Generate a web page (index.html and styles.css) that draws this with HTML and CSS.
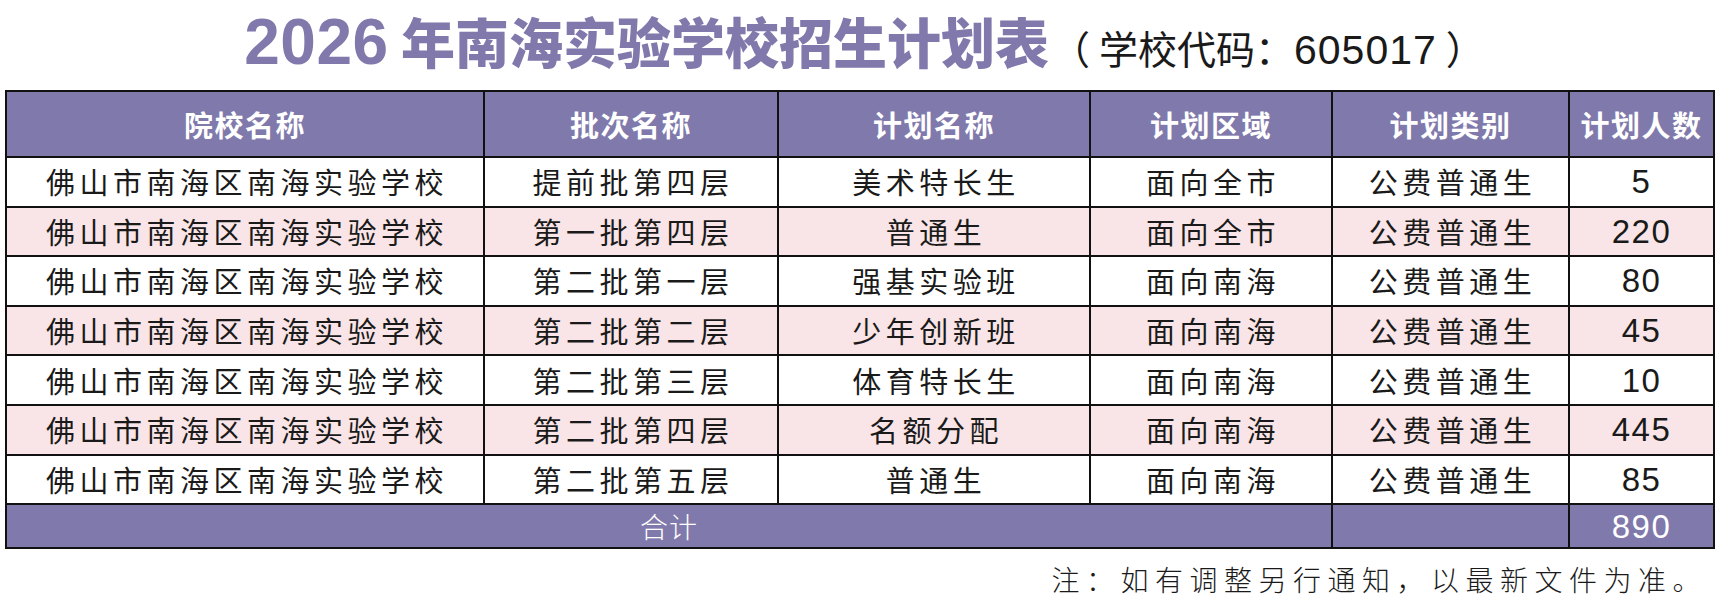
FILE: index.html
```html
<!DOCTYPE html>
<html lang="zh-CN">
<head>
<meta charset="utf-8">
<title>2026 年南海实验学校招生计划表</title>
<link rel="stylesheet" href="styles.css">
</head>
<body>
<div class="page">
  <h1 class="title">
    <span class="title-main"><span class="yr">2026</span> 年南海实验学校招生计划表</span>
    <span class="code">（<span class="gap"></span>学校代码：<span class="num">605017</span><span class="gap"></span>）</span>
  </h1>
  <table class="plan">
    <colgroup>
      <col class="c1"><col class="c2"><col class="c3"><col class="c4"><col class="c5"><col class="c6">
    </colgroup>
    <thead>
      <tr class="head">
        <th>院校名称</th><th>批次名称</th><th>计划名称</th><th>计划区域</th><th>计划类别</th><th>计划人数</th>
      </tr>
    </thead>
    <tbody>
      <tr><td>佛山市南海区南海实验学校</td><td>提前批第四层</td><td>美术特长生</td><td>面向全市</td><td>公费普通生</td><td class="n">5</td></tr>
      <tr class="alt"><td>佛山市南海区南海实验学校</td><td>第一批第四层</td><td>普通生</td><td>面向全市</td><td>公费普通生</td><td class="n">220</td></tr>
      <tr><td>佛山市南海区南海实验学校</td><td>第二批第一层</td><td>强基实验班</td><td>面向南海</td><td>公费普通生</td><td class="n">80</td></tr>
      <tr class="alt"><td>佛山市南海区南海实验学校</td><td>第二批第二层</td><td>少年创新班</td><td>面向南海</td><td>公费普通生</td><td class="n">45</td></tr>
      <tr><td>佛山市南海区南海实验学校</td><td>第二批第三层</td><td>体育特长生</td><td>面向南海</td><td>公费普通生</td><td class="n">10</td></tr>
      <tr class="alt"><td>佛山市南海区南海实验学校</td><td>第二批第四层</td><td>名额分配</td><td>面向南海</td><td>公费普通生</td><td class="n">445</td></tr>
      <tr><td>佛山市南海区南海实验学校</td><td>第二批第五层</td><td>普通生</td><td>面向南海</td><td>公费普通生</td><td class="n">85</td></tr>
    </tbody>
    <tfoot>
      <tr class="total">
        <td colspan="4" class="label">合计</td><td></td><td class="n">890</td>
      </tr>
    </tfoot>
  </table>
  <p class="note">注：如有调整另行通知，以最新文件为准。</p>
</div>
</body>
</html>
```

FILE: styles.css
```css
html, body {
  margin: 0;
  padding: 0;
  background: #ffffff;
}

.page {
  width: 1719px;
  height: 605px;
  font-family: "Noto Sans CJK SC", "Liberation Sans", sans-serif;
  color: #1a1a1a;
}

.title {
  margin: 0;
  height: 90px;
  display: flex;
  justify-content: center;
  align-items: baseline;
  padding-left: 10px;
  box-sizing: border-box;
  line-height: 82px;
  font-weight: normal;
}

.title-main {
  font-family: "Noto Sans CJK SC", sans-serif;
  font-weight: 900;
  font-size: 54px;
  color: #8178ac;
}

.title-main .yr {
  font-family: "Liberation Sans", sans-serif;
  font-weight: 700;
  font-size: 64px;
  letter-spacing: 0.5px;
}

.code {
  margin-left: 2px;
  font-family: "Noto Sans CJK SC", sans-serif;
  font-size: 39px;
  color: #1a1a1a;
}

.code .gap {
  display: inline-block;
  width: 9px;
}

.code .num {
  font-family: "Liberation Sans", sans-serif;
  font-size: 41px;
  letter-spacing: 1px;
}

.plan {
  margin-left: 5px;
  width: 1708px;
  table-layout: fixed;
  border-collapse: collapse;
  border: 2px solid #111;
}

.plan col.c1 { width: 478px; }
.plan col.c2 { width: 294px; }
.plan col.c3 { width: 312px; }
.plan col.c4 { width: 242px; }
.plan col.c5 { width: 237px; }
.plan col.c6 { width: 145px; }

.plan th,
.plan td {
  border: 2px solid #111;
  padding: 0;
  text-align: center;
  vertical-align: middle;
  white-space: nowrap;
}

.plan tr.head {
  height: 66px;
}

.plan th {
  background: #8079ab;
  color: #ffffff;
  font-weight: 700;
  font-size: 29px;
  letter-spacing: 1.5px;
}

.plan tbody tr {
  height: 49.6px;
}

.plan tbody td {
  font-size: 29px;
  letter-spacing: 4.5px;
  padding-left: 4px;
  line-height: 1;
}

.plan tbody tr.alt td {
  background: #f9e5e7;
}

.plan td.n {
  font-family: "Liberation Sans", sans-serif;
  font-size: 33px;
  letter-spacing: 1.5px;
  padding-left: 0;
}

.plan tr.total {
  height: 44px;
}

.plan tr.total td {
  background: #8079ab;
  color: #ffffff;
  line-height: 1;
}

.plan tr.total td.label {
  font-size: 28px;
  font-weight: 300;
  letter-spacing: 1px;
}

.plan tr.total td.n {
  font-size: 33px;
}

.note {
  margin: 14px 12px 0 0;
  text-align: right;
  font-family: "Noto Sans CJK SC", sans-serif;
  font-size: 28px;
  letter-spacing: 6.5px;
  line-height: 32px;
  color: #1a1a1a;
  font-weight: 300;
}
```
